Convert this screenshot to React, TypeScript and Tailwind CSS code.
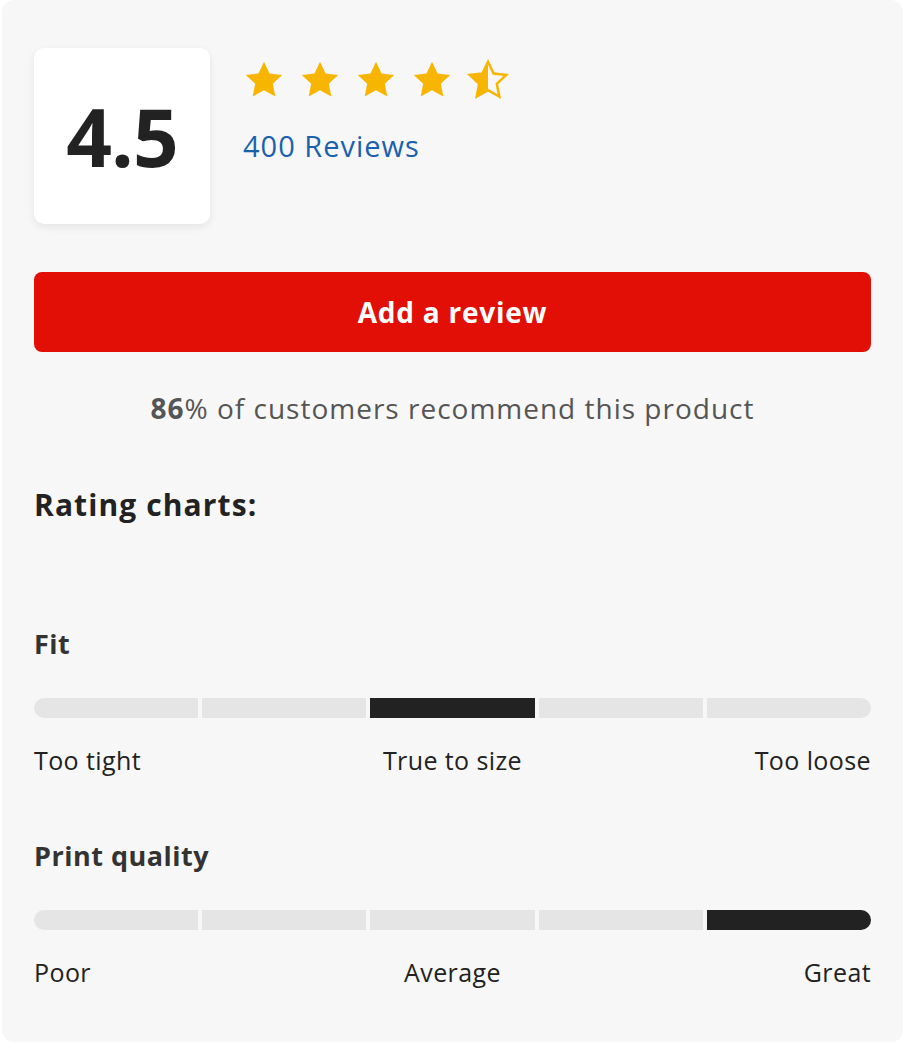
import React from 'react';

const STAR = 'M12 2.5l2.9 6.1 6.6.8-4.9 4.6 1.3 6.6L12 17.3l-5.9 3.3 1.3-6.6-4.9-4.6 6.6-.8z';

function Star({ half }: { half?: boolean }) {
  return (
    <svg viewBox="0 0 24 24" className="w-[46px] h-[46px]">
      <defs>
        <clipPath id="halfclip">
          <rect x="0" y="0" width="12" height="24" />
        </clipPath>
      </defs>
      {half ? (
        <>
          <path d={STAR} fill="none" stroke="#f8b500" strokeWidth="1.3" strokeLinejoin="miter" />
          <path d={STAR} fill="#f8b500" clipPath="url(#halfclip)" />
        </>
      ) : (
        <path d={STAR} fill="#f8b500" />
      )}
    </svg>
  );
}

function Chart({ title, active, labels }: { title: string; active: number; labels: string[] }) {
  return (
    <div>
      <div className="text-[27px] font-bold text-[#333] leading-none tracking-[0.5px]">{title}</div>
      <div className="mt-[41px] flex gap-[4px]">
        {[0, 1, 2, 3, 4].map((i) => (
          <div
            key={i}
            className={
              'h-[20px] flex-1 ' +
              (i === active ? 'bg-[#222]' : 'bg-[#e5e5e5]') +
              (i === 0 ? ' rounded-l-full' : '') +
              (i === 4 ? ' rounded-r-full' : '')
            }
          />
        ))}
      </div>
      <div className="mt-[30px] grid grid-cols-3 text-[25px] text-[#222] leading-none tracking-[0.4px]">
        <span className="text-left">{labels[0]}</span>
        <span className="text-center">{labels[1]}</span>
        <span className="text-right">{labels[2]}</span>
      </div>
    </div>
  );
}

export default function App() {
  return (
    <div className="bg-white min-h-screen pl-[2px] pr-[3px]" style={{ fontFamily: '"Open Sans", "Noto Sans", sans-serif' }}>
      <div className="bg-[#f7f7f7] rounded-[12px] px-[32px] pt-[48px] pb-[56px] h-[1042px]">
        <div className="flex gap-[33px]">
          <div className="w-[176px] h-[176px] bg-white rounded-[10px] shadow-[0_3px_8px_rgba(0,0,0,0.08)] flex items-center justify-center">
            <span className="text-[80px] font-bold text-[#222] leading-none tracking-[-1px]">4.5</span>
          </div>
          <div className="pt-[9px]">
            <div className="flex gap-[10px] -ml-[2px]">
              <Star />
              <Star />
              <Star />
              <Star />
              <Star half />
            </div>
            <div className="mt-[28px] text-[29px] text-[#1a62ad] leading-none tracking-[1px]">400 Reviews</div>
          </div>
        </div>

        <button className="mt-[48px] w-full h-[80px] rounded-[8px] bg-[#e20f06] text-white text-[28px] font-bold tracking-[0.75px] flex items-center justify-center">
          Add a review
        </button>

        <div className="mt-[42px] text-center text-[28px] text-[#555] leading-none tracking-[1px]">
          <span className="font-bold">86</span>% of customers recommend this product
        </div>

        <div className="mt-[68px] text-[30px] font-bold text-[#222] leading-none tracking-[1.1px]">Rating charts:</div>

        <div className="mt-[110px]">
          <Chart title="Fit" active={2} labels={['Too tight', 'True to size', 'Too loose']} />
        </div>
        <div className="mt-[69px]">
          <Chart title="Print quality" active={4} labels={['Poor', 'Average', 'Great']} />
        </div>
      </div>
    </div>
  );
}
